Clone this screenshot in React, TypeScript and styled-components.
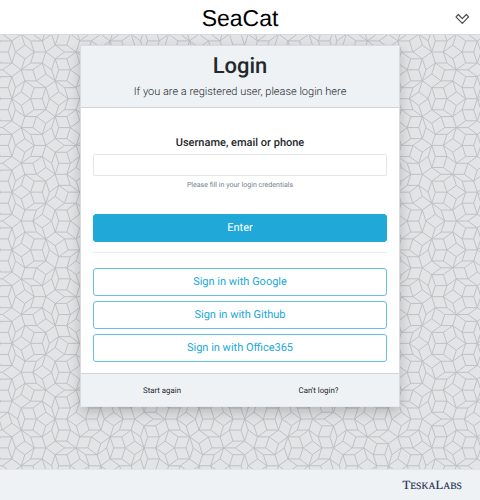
import React, { useState } from "react";
import styled, { createGlobalStyle } from "styled-components";

const GlobalStyle = createGlobalStyle`
  * { box-sizing: border-box; }
  body {
    margin: 0;
    font-family: Roboto, "Liberation Sans", sans-serif;
    color: #23282c;
    text-rendering: geometricPrecision;
  }
  button { text-rendering: inherit; }
`;

const PatternLayer = styled.svg`
  position: absolute;
  inset: 0;
  width: 480px;
  height: 500px;
`;

const Page = styled.div`
  position: relative;
  width: 480px;
  height: 500px;
  overflow: hidden;
  display: flex;
  flex-direction: column;
  background: #e3e4e6;
`;

const Header = styled.header`
  position: relative;
  flex: 0 0 35px;
  display: grid;
  grid-template-columns: 40px 1fr 40px;
  align-items: center;
  background: #fff;
  border-bottom: 1px solid #d5dadd;
`;

const Brand = styled.div`
  grid-column: 2;
  text-align: center;
  font: 23px/32px "Liberation Sans", Arial, sans-serif;
  padding-top: 2px;
  color: #000;
`;

const MenuButton = styled.button`
  display: flex;
  width: 16px;
  height: 14px;
  margin: 4px 0 0 14px;
  padding: 0;
  border: 0;
  background: none;
`;

const Main = styled.main`
  position: relative;
  flex: 1;
  display: flex;
  align-items: flex-start;
  justify-content: center;
  padding-top: 10px;
`;

const Card = styled.section`
  display: flex;
  flex-direction: column;
  width: 320px;
  height: 362px;
  background: #fff;
  border: 1px solid #d8dcdf;
  border-bottom-color: #e6eaed;
  box-shadow: 0 5px 12px rgba(0, 0, 0, 0.2);
`;

const CardHeader = styled.div`
  flex: 0 0 62px;
  background: #eef2f5;
  border-bottom: 1px solid #cdd5da;
  text-align: center;
`;

const Title = styled.h1`
  margin: 8px 0 0;
  font-size: 22px;
  line-height: 26px;
  font-weight: 500;
`;

const Subtitle = styled.p`
  margin: 4px 0 0;
  font-size: 11px;
  line-height: 15px;
  font-weight: 300;
`;

const Form = styled.form`
  flex: 1;
  display: flex;
  flex-direction: column;
  padding: 27px 12px 0;
  text-align: center;
`;

const Label = styled.label`
  font-size: 11px;
  line-height: 15px;
  font-weight: 500;
`;

const Input = styled.input`
  height: 22px;
  margin-top: 4px;
  padding: 0 6px;
  border: 1px solid #e4e7ea;
  border-radius: 2px;
  outline: none;
`;

const Hint = styled.small`
  margin-top: 4px;
  font-size: 7.05px;
  line-height: 10px;
  color: #73818f;
`;

const Button = styled.button<{ $primary?: boolean }>`
  flex: none;
  height: 28px;
  padding: 0 0 1px;
  border: 1px solid ${(p) => (p.$primary ? "#20a8d8" : "#63c2e4")};
  border-radius: 3px;
  background: ${(p) => (p.$primary ? "#20a8d8" : "#fff")};
  color: ${(p) => (p.$primary ? "#fff" : "#20a8d8")};
  font: 400 11px/25px Roboto, sans-serif;
`;

const Submit = styled(Button)`
  margin-top: 24px;
`;

const Divider = styled.hr`
  width: 100%;
  margin: 10px 0 15px;
  border: 0;
  border-top: 1px solid #e8eaec;
`;

const Providers = styled.div`
  display: flex;
  flex-direction: column;
  gap: 5px;
`;

const CardFooter = styled.div`
  flex: 0 0 33px;
  display: grid;
  grid-template-columns: 162px 151px;
  background: #eef2f5;
  border-top: 1px solid #d0d5d9;
`;

const FooterLink = styled.a`
  padding-top: 3px;
  text-align: center;
  font-size: 7.85px;
  line-height: 28px;
`;

const Footer = styled.footer`
  position: relative;
  flex: 0 0 31px;
  display: flex;
  justify-content: flex-end;
  align-items: center;
  padding: 1px 18px 0 0;
  background: #eef2f5;
  border-top: 1px solid #e0e5e8;
`;

const Company = styled.span`
  font: 12.6px/15px "Liberation Serif", serif;
  color: #202b50;
  -webkit-text-stroke: 0.15px #202b50;
`;

const Small = styled.span`
  font-size: 9.7px;
`;

// Rhombic tiling from five families of parallel lines (de Bruijn's pentagrid).
const EDGE = 11.6;
const ORIGIN = { x: 61, y: 98.7 };
const OFFSETS = [0.24, 0.17, -0.29, -0.29, 0.17];

function tilingPath(): string {
  const dirs = OFFSETS.map((_, i) => [
    Math.cos((2 * Math.PI * i) / 5),
    Math.sin((2 * Math.PI * i) / 5),
  ]);
  const edges = new Set<string>();
  const point = (k: number[]) => {
    let x = 0;
    let y = 0;
    k.forEach((n, i) => {
      x += n * dirs[i][0];
      y += n * dirs[i][1];
    });
    return [ORIGIN.x + x * EDGE, ORIGIN.y + y * EDGE];
  };
  const add = (a: number[], i: number) => {
    const b = a.slice();
    b[i] += 1;
    const [x1, y1] = point(a);
    const [x2, y2] = point(b);
    edges.add(`M${x1.toFixed(2)} ${y1.toFixed(2)}L${x2.toFixed(2)} ${y2.toFixed(2)}`);
  };
  for (let j = 0; j < 5; j++) {
    for (let k = j + 1; k < 5; k++) {
      const [jx, jy] = dirs[j];
      const [kx, ky] = dirs[k];
      const det = jx * ky - jy * kx;
      for (let a = -24; a <= 24; a++) {
        for (let b = -24; b <= 24; b++) {
          const u = a - OFFSETS[j];
          const v = b - OFFSETS[k];
          const x = (u * ky - v * jy) / det;
          const y = (jx * v - kx * u) / det;
          if (x < -5 || x > 17 || y < -5 || y > 15.5) continue;
          const n = dirs.map((d, i) => Math.ceil(x * d[0] + y * d[1] + OFFSETS[i]));
          n[j] = a;
          n[k] = b;
          const nj = n.slice();
          nj[j]++;
          const nk = n.slice();
          nk[k]++;
          add(n, j);
          add(n, k);
          add(nk, j);
          add(nj, k);
        }
      }
    }
  }
  return [...edges].join("");
}

const TILING = tilingPath();

export default function App() {
  const [user, setUser] = useState("");
  return (
    <>
      <GlobalStyle />
      <Page>
        <PatternLayer viewBox="0 0 480 500" aria-hidden="true">
          <path d={TILING} fill="none" stroke="#b8c0c1" strokeWidth="0.9" />
        </PatternLayer>
        <Header>
          <Brand>SeaCat</Brand>
          <MenuButton aria-label="Menu">
            <svg width="16" height="14" viewBox="0 0 16 14">
              <path
                d="M2 4.8 4.3 2.5 8.3 6.6 12.3 2.5 14.6 4.8 8.3 11.3Z"
                fill="none"
                stroke="#4b4e51"
                strokeWidth="1.2"
                strokeLinejoin="round"
              />
            </svg>
          </MenuButton>
        </Header>
        <Main>
          <Card>
            <CardHeader>
              <Title>Login</Title>
              <Subtitle>If you are a registered user, please login here</Subtitle>
            </CardHeader>
            <Form onSubmit={(e) => e.preventDefault()}>
              <Label htmlFor="user">Username, email or phone</Label>
              <Input id="user" value={user} onChange={(e) => setUser(e.target.value)} />
              <Hint>Please fill in your login credentials</Hint>
              <Submit $primary type="submit">Enter</Submit>
              <Divider />
              <Providers>
                {["Google", "Github", "Office365"].map((name) => (
                  <Button key={name} type="button">{`Sign in with ${name}`}</Button>
                ))}
              </Providers>
            </Form>
            <CardFooter>
              <FooterLink>Start again</FooterLink>
              <FooterLink>Can't login?</FooterLink>
            </CardFooter>
          </Card>
        </Main>
        <Footer>
          <Company>T<Small>ESKA</Small>L<Small>ABS</Small></Company>
        </Footer>
      </Page>
    </>
  );
}
